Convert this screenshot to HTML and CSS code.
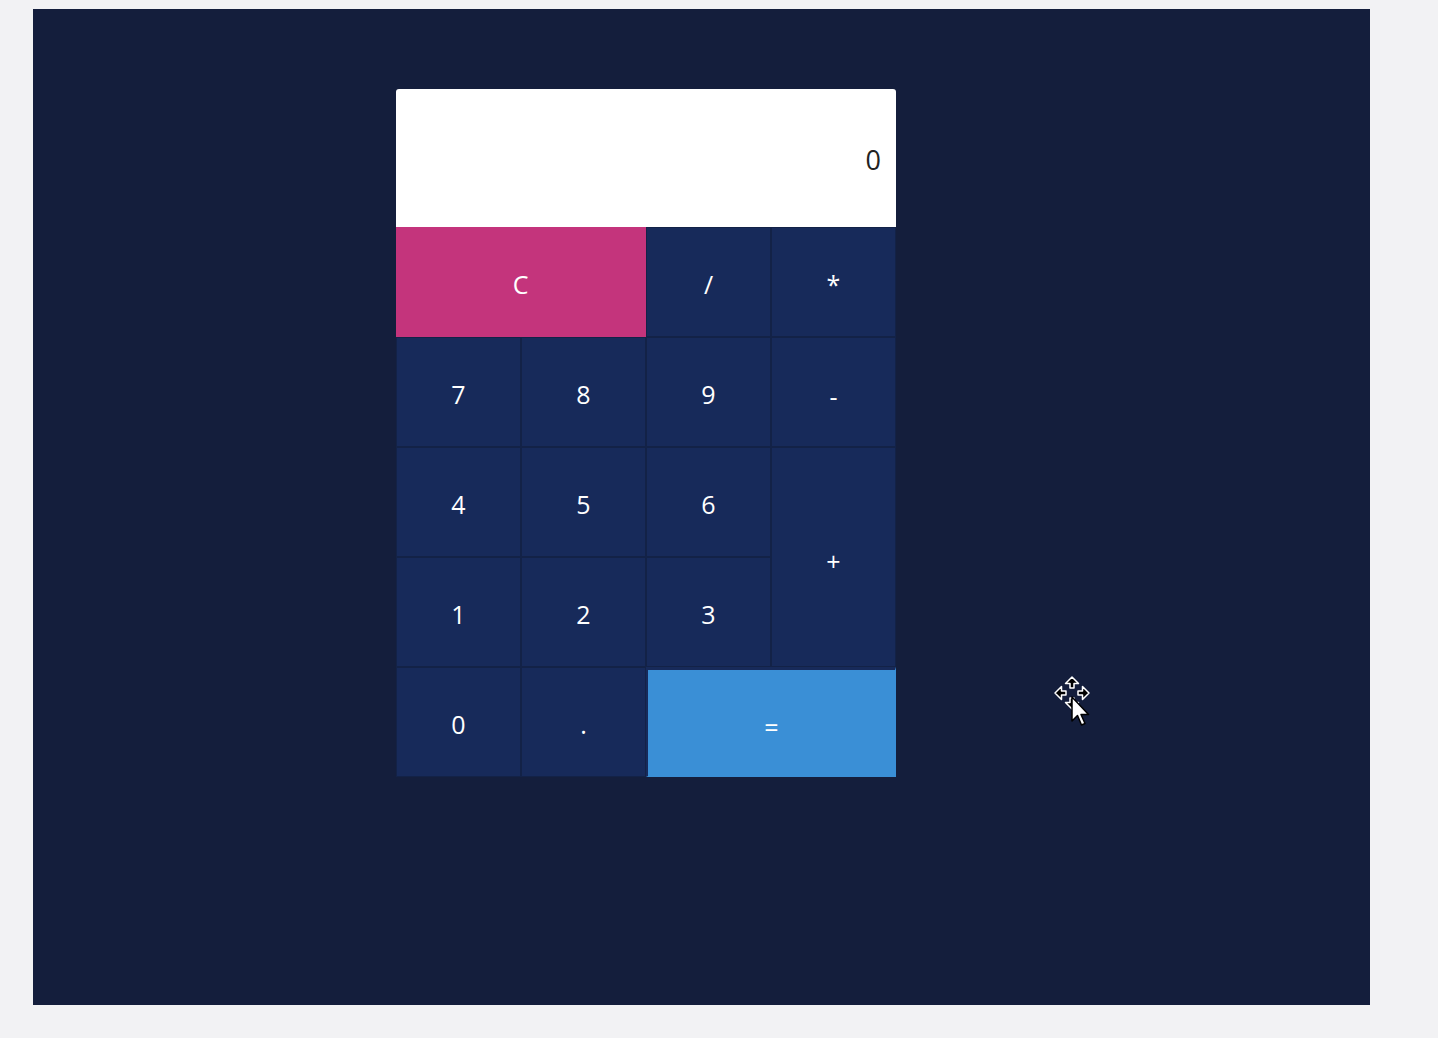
FILE: index.html
```html
<!DOCTYPE html>
<html>
<head>
<meta charset="utf-8">
<link rel="stylesheet" href="styles.css">
</head>
<body>
<div class="stage">
  <div class="calc">
    <div class="display">0</div>
    <div class="keys">
      <button class="key clear">C</button>
      <button class="key">/</button>
      <button class="key">*</button>
      <button class="key">7</button>
      <button class="key">8</button>
      <button class="key">9</button>
      <button class="key sym">-</button>
      <button class="key">4</button>
      <button class="key">5</button>
      <button class="key">6</button>
      <button class="key plus sym">+</button>
      <button class="key">1</button>
      <button class="key">2</button>
      <button class="key">3</button>
      <button class="key">0</button>
      <button class="key">.</button>
      <button class="key equals sym">=</button>
    </div>
  </div>
  <svg class="cursor" width="45" height="60" viewBox="0 0 45 60">
    <g fill="#000" stroke="#fff" stroke-width="1.5" stroke-linejoin="round">
      <path d="M22 2 L28.5 8.5 L24 8.5 L24 13 L20 13 L20 8.5 L15.5 8.5 Z"/>
      <path d="M5 18 L11.5 11.5 L11.5 16 L16 16 L16 20 L11.5 20 L11.5 24.5 Z"/>
      <path d="M39 18 L32.5 11.5 L32.5 16 L28 16 L28 20 L32.5 20 L32.5 24.5 Z"/>
      <path d="M22 34 L28.5 27.5 L24 27.5 L24 23 L20 23 L20 27.5 L15.5 27.5 Z"/>
    </g>
    <path d="M22 22 L22 46 L27.5 40.5 L31.5 50 L35 48.5 L31 39.5 L38.5 39.5 Z" fill="#fff" stroke="#000" stroke-width="1.5" stroke-linejoin="round"/>
  </svg>
</div>
</body>
</html>
```
FILE: styles.css
```css
html, body {
  margin: 0;
  padding: 0;
  background: #f2f2f4;
  font-family: "Open Sans", "Noto Sans", sans-serif;
}
.stage {
  position: relative;
  margin: 9px 0 0 33px;
  width: 1337px;
  height: 996px;
  background: #141e3c;
  padding: 80px 0 0 363px;
  box-sizing: border-box;
}
.calc {
  width: 500px;
}
.display {
  height: 138px;
  background: #ffffff;
  border-radius: 3px 3px 0 0;
  color: #222;
  font-size: 27px;
  display: flex;
  align-items: center;
  justify-content: flex-end;
  padding: 2px 15px 0 0;
  box-sizing: border-box;
}
.keys {
  display: grid;
  grid-template-columns: repeat(4, 125px);
  grid-template-rows: repeat(5, 110px);
}
.key {
  background: #172a5a;
  border: 1px solid #132247;
  color: #ffffff;
  font-family: "Open Sans", "Noto Sans", sans-serif;
  font-size: 25px;
  padding: 4px 0 0 0;
  margin: 0;
}
.sym {
  padding-top: 8px;
}
.clear {
  grid-column: span 2;
  background: #c4347c;
  border-color: #c4347c;
  border-right-width: 2px;
}
.plus {
  grid-row: span 2;
}
.equals {
  grid-column: span 2;
  background: #3a8fd6;
  border-color: #3a8fd6;
  border-left: 2px solid #172a5a;
  border-top: 3px solid #172a5a;
}
.cursor {
  position: absolute;
  left: 1017px;
  top: 666px;
}
```
